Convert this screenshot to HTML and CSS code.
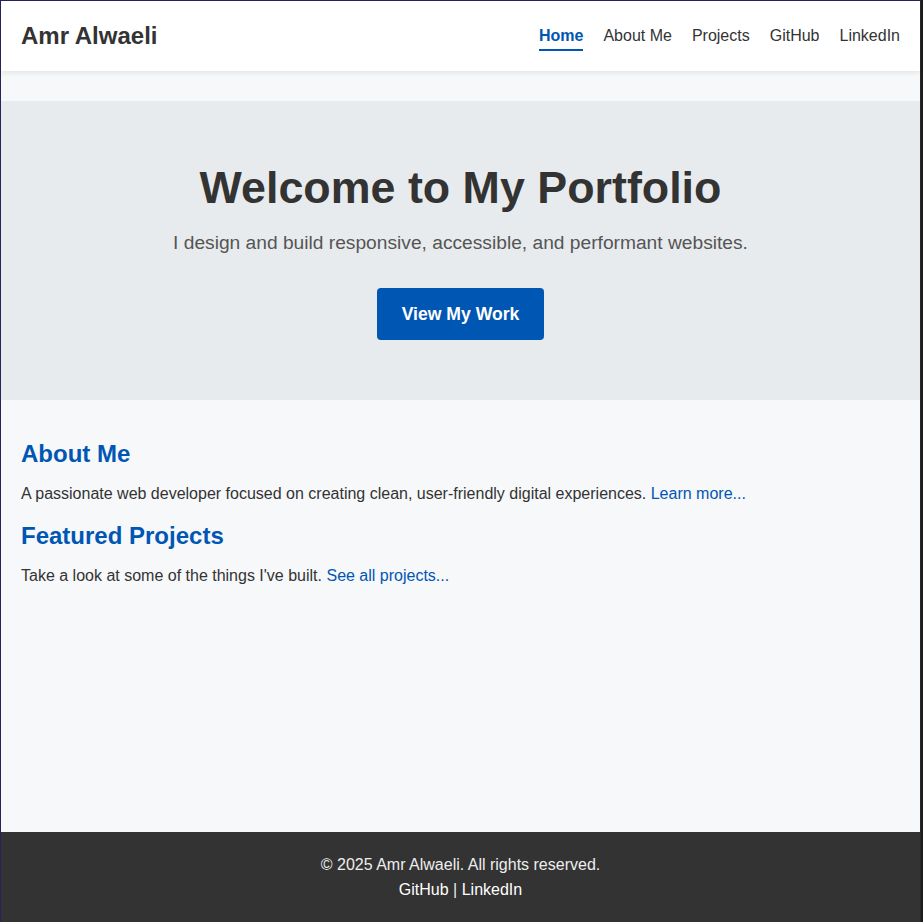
FILE: index.html
```html
<!DOCTYPE html>
<html lang="en">
<head>
<meta charset="utf-8">
<title>Amr Alwaeli - Portfolio</title>
<link rel="stylesheet" href="styles.css">
</head>
<body>
<div class="frame">
  <header class="site-header">
    <div class="brand">Amr Alwaeli</div>
    <nav class="nav">
      <a class="nav-link active" href="#">Home</a>
      <a class="nav-link" href="#">About Me</a>
      <a class="nav-link" href="#">Projects</a>
      <a class="nav-link" href="#">GitHub</a>
      <a class="nav-link" href="#">LinkedIn</a>
    </nav>
  </header>
  <main class="main">
    <section class="hero">
      <h1 class="hero-title">Welcome to My Portfolio</h1>
      <p class="hero-sub">I design and build responsive, accessible, and performant websites.</p>
      <a class="btn" href="#">View My Work</a>
    </section>
    <section class="content">
      <h2 class="sec-title">About Me</h2>
      <p class="sec-text">A passionate web developer focused on creating clean, user-friendly digital experiences. <a href="#">Learn more...</a></p>
      <h2 class="sec-title">Featured Projects</h2>
      <p class="sec-text">Take a look at some of the things I've built. <a href="#">See all projects...</a></p>
    </section>
  </main>
  <footer class="site-footer">
    <p class="footer-text">© 2025 Amr Alwaeli. All rights reserved.<br><a href="#">GitHub</a> | <a href="#">LinkedIn</a></p>
  </footer>
</div>
<div class="side"></div>
</body>
</html>
```
FILE: styles.css
```css
* { box-sizing: border-box; }
html, body { margin: 0; padding: 0; height: 100%; }
body {
  display: flex;
  font-family: "Liberation Sans", Arial, sans-serif;
  color: #333;
  background: #1b1b1b;
  overflow: hidden;
}
.frame {
  flex: 1;
  display: flex;
  flex-direction: column;
  min-height: 100vh;
  border-left: 1px solid #25255a;
  border-top: 1px solid #25255a;
  background: #f7f8fa;
}
.side {
  width: 3px;
  background: #1b1b1b;
  border-left: 1px solid #2a2a2a;
}
.site-header {
  height: 70px;
  background: #fff;
  display: flex;
  align-items: center;
  justify-content: space-between;
  padding: 0 20px;
  box-shadow: 0 2px 5px rgba(0,0,0,0.08);
  position: relative;
  z-index: 1;
}
.brand {
  font-size: 24px;
  font-weight: bold;
  color: #333;
}
.nav { display: flex; gap: 20px; margin-top: 2px; }
.nav-link {
  font-size: 16px;
  color: #333;
  text-decoration: none;
  padding: 4px 0;
  border-bottom: 2px solid transparent;
}
.nav-link.active {
  color: #0056b3;
  font-weight: bold;
  border-bottom-color: #0056b3;
}
.main { flex: 1; padding-top: 30px; }
.hero {
  background: #e8ebee;
  text-align: center;
  padding: 61px 20px 60px;
}
.hero-title {
  font-size: 44.8px;
  margin: 0 0 19px;
  color: #333;
}
.hero-sub {
  font-size: 19.2px;
  color: #555;
  margin: 0 0 34px;
}
.btn {
  display: inline-block;
  background: #0056b3;
  color: #fff;
  font-weight: bold;
  font-size: 17.6px;
  line-height: 20px;
  padding: 16px 25px;
  border-radius: 4px;
  text-decoration: none;
}
.content { padding: 40px 20px 20px; }
.sec-title {
  font-size: 24px;
  color: #0056b3;
  margin: 0 0 17px;
}
.sec-text {
  font-size: 16px;
  margin: 0 0 19px;
}
.sec-text a { color: #0056b3; text-decoration: none; }
.site-footer {
  background: #333;
  color: #eee;
  text-align: center;
  padding: 20px;
}
.footer-text { margin: 0; font-size: 16px; line-height: 25px; }
.footer-text a { color: #fff; text-decoration: none; }
```
